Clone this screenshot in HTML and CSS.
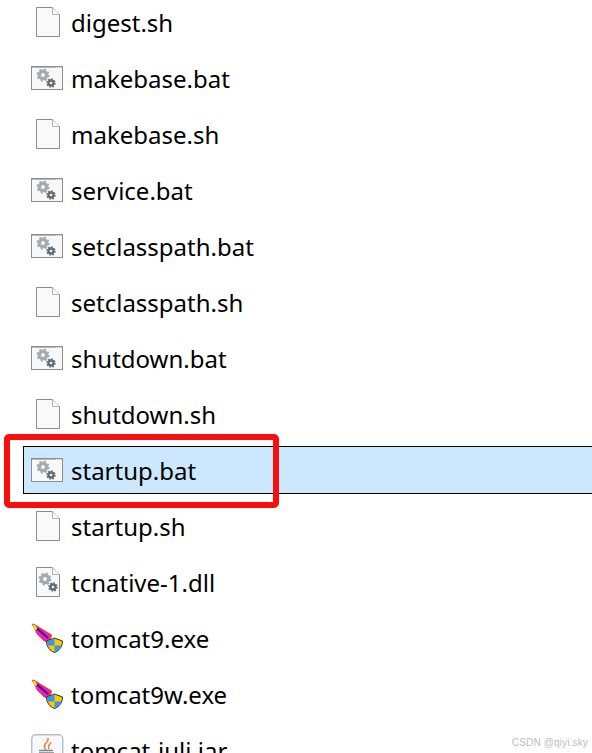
FILE: index.html
```html
<!DOCTYPE html>
<html lang="en">
  <head>
    <meta charset="UTF-8" />
    <title>bin folder</title>
    <link rel="stylesheet" href="styles.css">
  </head>
  <body>
    <svg class="defs" width="0" height="0">
      <symbol id="gears" viewBox="0 0 33 24">
        <circle cx="12" cy="9" r="3.6" fill="none" stroke="#a3abb2" stroke-width="3.4"/>
        <circle cx="12" cy="9" r="5.6" fill="none" stroke="#a3abb2" stroke-width="1.8" stroke-dasharray="2.2 2.2"/>
        <circle cx="20" cy="17" r="2.5" fill="none" stroke="#636c74" stroke-width="2.4"/>
        <circle cx="20" cy="17" r="4" fill="none" stroke="#636c74" stroke-width="1.5" stroke-dasharray="1.6 1.5"/>
      </symbol>
      <symbol id="bat" viewBox="0 0 33 24">
        <rect x="0.5" y="0.5" width="31" height="23" fill="#f8f8f8" stroke="#8d8d8d"/>
        <path d="M1 1.5h30" stroke="#b9b9b9"/>
        <path d="M25 1.5h1M27 1.5h1M29 1.5h1" stroke="#fff"/>
        <use href="#gears" width="33" height="24"/>
      </symbol>
      <symbol id="page" viewBox="0 0 24 30">
        <path d="M0.5 0.5H16.5L23.5 7.5V29.5H0.5Z" fill="#f9f9f9" stroke="#8a8a8a"/>
        <path d="M16.5 0.5V7.5H23.5" fill="#fff" stroke="#b5b5b5"/>
      </symbol>
      <symbol id="dll" viewBox="0 0 24 30">
        <use href="#page" width="24" height="30"/>
        <g transform="translate(-3 3)"><use href="#gears" width="33" height="24"/></g>
      </symbol>
      <symbol id="tomcat" viewBox="0 0 33 32">
        <path d="M1 2L3 2L21 13L18 21L13 19L6 12Z" fill="#fb2a3a" stroke="#7a5a1a" stroke-width="0.4"/>
        <path d="M1.5 2.5L19.5 14L16 19.5L6 11Z" fill="#ff12d0"/>
        <path d="M1.5 2.5L4 3L6.5 7L4 8Z" fill="#f8ec00"/>
        <path d="M6 6.5L17 16" stroke="#1818a0" stroke-width="1.8"/>
        <path d="M15.5 19L23.5 16L31.5 19C31.5 25 28 29 23.5 30.5C19 29 15.5 25 15.5 19Z" fill="#ffc800" stroke="#33332a"/>
        <path d="M23.5 16.5L16 19.3C16 20.8 16.2 22 16.6 23.5H23.5Z" fill="#2f9be8"/>
        <path d="M23.5 23.5V30C27 28.8 29.6 26.4 30.5 23.5Z" fill="#2f9be8"/>
      </symbol>
      <symbol id="jar" viewBox="0 0 33 32">
        <rect x="0.75" y="0.75" width="31" height="30.5" rx="4" fill="#f6f8fa" stroke="#b4c2cf" stroke-width="1.5"/>
        <path d="M17 4C19 8 11 10 15 16C12 13 13 10 15 8.5C16 7.5 17 6 17 4Z" fill="#e8762c" stroke="#e8762c" stroke-width="0.8"/>
        <path d="M20 8C19 10 16 11 18 15C17 12.5 19 11 20 8Z" fill="#e8762c" stroke="#e8762c" stroke-width="0.8"/>
        <path d="M8 16.5H22" stroke="#7d858c" stroke-width="1.5"/>
        <path d="M8 18H23V23C23 26 20 27 15.5 27C11 27 8 26 8 23Z" fill="#98a0a7"/>
      </symbol>
    </svg>

    <div class="file-list">
      <div class="file-row"><svg class="icon-page"><use href="#page"/></svg><span class="file-name">digest.sh</span></div>
      <div class="file-row"><svg class="icon-bat"><use href="#bat"/></svg><span class="file-name">makebase.bat</span></div>
      <div class="file-row"><svg class="icon-page"><use href="#page"/></svg><span class="file-name">makebase.sh</span></div>
      <div class="file-row"><svg class="icon-bat"><use href="#bat"/></svg><span class="file-name">service.bat</span></div>
      <div class="file-row"><svg class="icon-bat"><use href="#bat"/></svg><span class="file-name">setclasspath.bat</span></div>
      <div class="file-row"><svg class="icon-page"><use href="#page"/></svg><span class="file-name">setclasspath.sh</span></div>
      <div class="file-row"><svg class="icon-bat"><use href="#bat"/></svg><span class="file-name">shutdown.bat</span></div>
      <div class="file-row"><svg class="icon-page"><use href="#page"/></svg><span class="file-name">shutdown.sh</span></div>
      <div class="file-row selected">
        <svg class="icon-bat"><use href="#bat"/></svg><span class="file-name">startup.bat</span>
        <div class="red-box"></div>
      </div>
      <div class="file-row"><svg class="icon-page"><use href="#page"/></svg><span class="file-name">startup.sh</span></div>
      <div class="file-row"><svg class="icon-page"><use href="#dll"/></svg><span class="file-name">tcnative-1.dll</span></div>
      <div class="file-row"><svg class="icon-app"><use href="#tomcat"/></svg><span class="file-name">tomcat9.exe</span></div>
      <div class="file-row"><svg class="icon-app"><use href="#tomcat"/></svg><span class="file-name">tomcat9w.exe</span></div>
      <div class="file-row"><svg class="icon-app"><use href="#jar"/></svg><span class="file-name">tomcat-juli.jar</span></div>
    </div>

    <div class="watermark">CSDN @qiyi.sky</div>
  </body>
</html>
```

FILE: styles.css
```css
* {
  padding: 0;
  margin: 0;
  box-sizing: border-box;
}

body {
  width: 592px;
  height: 753px;
  overflow: hidden;
  position: relative;
  background-color: #fff;
  font-family: "Noto Sans", sans-serif;
  color: #000;
}

.defs {
  position: absolute;
}

.file-list {
  display: flex;
  flex-direction: column;
  gap: 8px;
  margin-top: -2px;
  margin-left: 23px;
}

.file-row {
  height: 48px;
  flex: none;
  display: flex;
  align-items: center;
  padding-left: 7px;
  border: 1px solid transparent;
  position: relative;
}

.file-row.selected {
  background-color: #cce8ff;
  border-color: #000;
  border-right: none;
}

.file-name {
  font-size: 24px;
  line-height: 32px;
  margin-top: 2px;
  white-space: nowrap;
}

.icon-bat {
  width: 33px;
  height: 24px;
  margin-right: 7px;
}

.icon-page {
  width: 24px;
  height: 30px;
  margin-left: 5px;
  margin-right: 11px;
}

.icon-app {
  width: 33px;
  height: 32px;
  margin-right: 7px;
}

.red-box {
  position: absolute;
  left: -20px;
  top: -13px;
  width: 275px;
  height: 74px;
  border: 6px solid #fc0d0d;
  border-radius: 5px;
}

.watermark {
  position: absolute;
  right: 4px;
  bottom: 3px;
  font-family: "Liberation Sans", sans-serif;
  font-size: 10px;
  line-height: 14px;
  letter-spacing: 0.15px;
  color: #bdbdbd;
}
```
